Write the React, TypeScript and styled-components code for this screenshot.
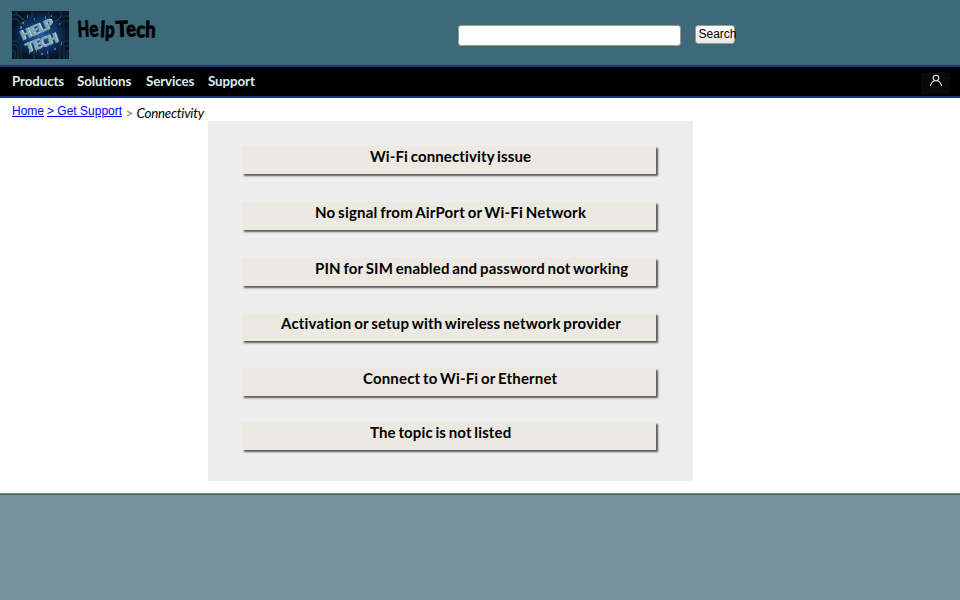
import React from 'react';
import styled, { createGlobalStyle } from 'styled-components';

const GlobalStyle = createGlobalStyle`
  * { box-sizing: border-box; }
  body {
    margin: 0;
    background: #fff;
    font-family: Lato, sans-serif;
    font-variant-ligatures: none;
    overflow: hidden;
  }
`;

const Page = styled.div`
  width: 960px;
  height: 600px;
  display: flex;
  flex-direction: column;
  overflow: hidden;
`;

const Header = styled.header`
  height: 65px;
  flex: none;
  display: flex;
  align-items: flex-start;
  background: #3c6a7b;
  padding: 11px 0 0 12px;
`;

const Logo = styled.svg`
  width: 57px;
  height: 48px;
  flex: none;
`;

const Brand = styled.div`
  width: 389px;
  height: 36px;
  padding-left: 9px;
  display: flex;
  color: #000;
  font: 900 22px/35px Lato, sans-serif;
  -webkit-text-stroke: 0.8px #000;
  white-space: nowrap;
`;

const BrandLetter = styled.span<{ $width: number; $tilt: number; $squeeze: number }>`
  width: ${(p) => p.$width}px;
  flex: none;
  transform-origin: 0 70%;
  transform: rotate(${(p) => p.$tilt}deg) scaleX(${(p) => p.$squeeze});
`;

const SearchForm = styled.form`
  display: flex;
  align-items: flex-start;
  gap: 14px;
  padding-top: 14px;
`;

const SearchInput = styled.input`
  width: 223px;
  height: 21px;
  padding: 0 4px;
  border: 1px solid #a39788;
  border-radius: 3px;
  background: #fff;
  outline: none;
`;

const SearchButton = styled.button`
  width: 40px;
  height: 19px;
  padding: 0 0 0 2.5px;
  border: 1px solid #a39788;
  border-radius: 3px;
  background: linear-gradient(#fff, #e8e8e8);
  color: #000;
  font: 12px/16px "Liberation Sans", Arial, sans-serif;
  text-align: left;
  white-space: nowrap;
  overflow: visible;
  display: flex;
`;

const NavBar = styled.nav`
  height: 33px;
  flex: none;
  display: flex;
  align-items: flex-start;
  padding: 0 10px 0 12px;
  background: #000;
  border-top: 2px solid #1c3380;
  border-bottom: 2px solid #1c3380;
`;

const NavLink = styled.a<{ $width: number }>`
  width: ${(p) => p.$width}px;
  color: #dfecee;
  font: 700 13.33px/28px Lato, sans-serif;
  letter-spacing: -0.1px;
  white-space: nowrap;
`;

const AccountButton = styled.button`
  width: 29px;
  height: 21px;
  margin: 6px 0 0 auto;
  padding: 0;
  border: 0;
  background: #090909;
  display: flex;
  justify-content: center;
`;

const Breadcrumb = styled.div`
  height: 23px;
  flex: none;
  display: flex;
  padding-left: 12px;
  white-space: nowrap;
`;

const Crumb = styled.a`
  margin-right: 3px;
  color: #0000ff;
  font: 12px/26px "Liberation Sans", Arial, sans-serif;
  text-decoration: underline;
`;

const Separator = styled.span`
  width: 11px;
  margin-left: 0.5px;
  color: #777;
  font: 13.33px/30px Lato, sans-serif;
`;

const Current = styled.span`
  color: #000;
  font: italic 13.33px/30px Lato, sans-serif;
  letter-spacing: -0.22px;
`;

const Panel = styled.main`
  width: 485px;
  height: 360px;
  flex: none;
  margin-left: 208px;
  padding: 25px 0 0 34px;
  background: #ededed;
`;

const Topic = styled.div<{ $indent: number; $gap: number; $tracking: number }>`
  width: 414px;
  height: 28px;
  margin-bottom: ${(p) => p.$gap}px;
  padding-left: ${(p) => p.$indent}px;
  background: #ece9e2;
  border-radius: 3px 0 0 0;
  box-shadow: 2px 2px 2px #5a5a5a;
  color: #000;
  font: 700 15px/21px Lato, sans-serif;
  letter-spacing: ${(p) => p.$tracking}px;
  word-spacing: -1.1px;
  white-space: nowrap;
`;

const Footer = styled.footer`
  height: 107px;
  flex: none;
  margin-top: 12px;
  background: #74939e;
  border-top: 1px solid #8b8f8f;
  box-shadow: inset 0 1px 0 #41595f;
`;

const topics = [
  { label: 'Wi-Fi connectivity issue', indent: 128, gap: 28, tracking: 0.13 },
  { label: 'No signal from AirPort or Wi-Fi Network', indent: 73, gap: 28, tracking: 0.2 },
  { label: 'PIN for SIM enabled and password not working', indent: 73, gap: 27, tracking: 0.15 },
  { label: 'Activation or setup with wireless network provider', indent: 39, gap: 27, tracking: 0.19 },
  { label: 'Connect to Wi-Fi or Ethernet', indent: 121, gap: 26, tracking: 0.17 },
  { label: 'The topic is not listed', indent: 128, gap: 0, tracking: 0.13 },
];

const navItems = [
  { label: 'Products', width: 65 },
  { label: 'Solutions', width: 69 },
  { label: 'Services', width: 62 },
  { label: 'Support', width: 60 },
];

const brandLetters = [
  { letter: 'H', width: 12, tilt: -3, squeeze: 0.68 },
  { letter: 'e', width: 9.5, tilt: -6, squeeze: 0.78 },
  { letter: 'l', width: 5.5, tilt: 3, squeeze: 0.85 },
  { letter: 'p', width: 10.5, tilt: 2, squeeze: 0.75 },
  { letter: 'T', width: 11, tilt: -2, squeeze: 0.92 },
  { letter: 'e', width: 9.5, tilt: -7, squeeze: 0.82 },
  { letter: 'c', width: 9, tilt: 3, squeeze: 0.85 },
  { letter: 'h', width: 11, tilt: 2, squeeze: 0.84 },
];

function CircuitLogo() {
  return (
    <Logo viewBox="0 0 57 48">
      <defs>
        <radialGradient id="glow">
          <stop offset="0" stopColor="#2360a4" />
          <stop offset=".55" stopColor="#0f3769" />
          <stop offset="1" stopColor="#071526" />
        </radialGradient>
      </defs>
      <rect width="57" height="48" fill="url(#glow)" />
      <g fill="none" stroke="#28506f" strokeWidth=".6">
        <path d="M0 4h7l6 6v5M0 8h5l5 6M4 0v3l9 7M0 30h5l4 5v13M0 34h4l2 3v11M0 40h3v8M57 5h-8l-4 5M57 10h-6l-4 4M49 0v6l-6 5M57 30h-5l-4 4v14M57 35h-5v13M57 40h-2v8M20 0v7M37 0v8M22 48v-8M36 48V38" />
      </g>
      <g fill="#3580bd">
        <path d="M10 11h2v2h-2zM15 4h1v3h-1zM22 7h1v2h-1zM33 5h1v3h-1zM47 12h1v2h-1zM17 39h1v4h-1zM29 42h2v2h-2zM42 37h2v2h-2zM49 31h1v3h-1zM24 37h1v4h-1zM35 40h1v3h-1zM39 4h1v2h-1zM8 15h2v3H8z" />
      </g>
      <g fontFamily="Lato, sans-serif" fontWeight="900" fontSize="13">
        <g fill="#c4e0ea">
          <text transform="translate(11.800 28.700) rotate(-23)" textLength="34" lengthAdjust="spacingAndGlyphs">HELP</text>
          <text transform="translate(16.800 41.200) rotate(-20)" textLength="33" lengthAdjust="spacingAndGlyphs">TECH</text>
        </g>
        <g fill="#7fa3ae" stroke="#7fa3ae" strokeWidth=".7">
          <text transform="translate(10.500 29.500) rotate(-23)" textLength="34" lengthAdjust="spacingAndGlyphs">HELP</text>
          <text transform="translate(15.500 42) rotate(-20)" textLength="33" lengthAdjust="spacingAndGlyphs">TECH</text>
        </g>
      </g>
    </Logo>
  );
}

export default function App() {
  return (
    <>
      <GlobalStyle />
      <Page>
        <Header>
          <CircuitLogo />
          <Brand>
            {brandLetters.map(({ letter, width, tilt, squeeze }, i) => (
              <BrandLetter key={i} $width={width} $tilt={tilt} $squeeze={squeeze}>{letter}</BrandLetter>
            ))}
          </Brand>
          <SearchForm>
            <SearchInput aria-label="Search" />
            <SearchButton type="button">Search</SearchButton>
          </SearchForm>
        </Header>
        <NavBar>
          {navItems.map((item) => (
            <NavLink key={item.label} $width={item.width}>{item.label}</NavLink>
          ))}
          <AccountButton aria-label="Account">
            <svg width="14" height="16" viewBox="0 0 14 16" fill="none" stroke="#e6e6e6" strokeWidth="1.1">
              <circle cx="7" cy="5" r="2.8" />
              <path d="M1.500 13c.4-3 2-4.500 4-5.300M8.500 7.700c2 .8 3.600 2.300 4 5.300" />
            </svg>
          </AccountButton>
        </NavBar>
        <Breadcrumb>
          <Crumb href="#">Home</Crumb>
          <Crumb href="#">&gt; Get Support</Crumb>
          <Separator>&gt;</Separator>
          <Current>Connectivity</Current>
        </Breadcrumb>
        <Panel>
          {topics.map(({ label, indent, gap, tracking }) => (
            <Topic key={label} $indent={indent} $gap={gap} $tracking={tracking}>{label}</Topic>
          ))}
        </Panel>
        <Footer />
      </Page>
    </>
  );
}
